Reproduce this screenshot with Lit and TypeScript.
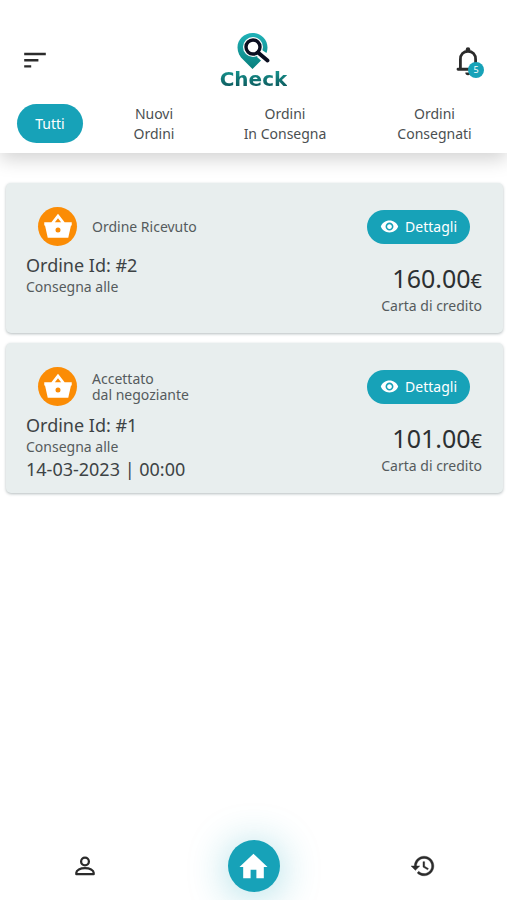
import { LitElement, html, css, svg, nothing } from "lit";
import { customElement, property, state } from "lit/decorators.js";
import { classMap } from "lit/directives/class-map.js";

interface Order {
  id: number;
  status: string[];
  total: string;
  payment: string;
  delivery?: string;
}

const ORDERS: Order[] = [
  { id: 2, status: ["Ordine Ricevuto"], total: "160.00", payment: "Carta di credito" },
  {
    id: 1,
    status: ["Accettato", "dal negoziante"],
    total: "101.00",
    payment: "Carta di credito",
    delivery: "14-03-2023 | 00:00",
  },
];

const TABS: string[][] = [
  ["Tutti"],
  ["Nuovi", "Ordini"],
  ["Ordini", "In Consegna"],
  ["Ordini", "Consegnati"],
];

const lines = (parts: string[]) => parts.map((p, i) => html`${i ? html`<br />` : nothing}${p}`);

const shape = {
  basket: svg`<path fill-rule="evenodd" d="M1 8.200h5.700L12 1.300l5.300 6.900H23v2.600h-.6L20.200 20.500H3.800L1.600 10.800H1zM9.500 8.200h5L12 4.900zM12 12.300a2 2 0 1 0 0 4 2 2 0 0 0 0-4z"/>`,
  eye: svg`<path d="M12 4.500C7 4.500 2.730 7.610 1 12c1.730 4.390 6 7.500 11 7.500s9.270-3.110 11-7.500c-1.730-4.390-6-7.500-11-7.500zM12 17c-2.760 0-5-2.240-5-5s2.240-5 5-5 5 2.240 5 5-2.240 5-5 5zm0-8c-1.660 0-3 1.340-3 3s1.340 3 3 3 3-1.340 3-3-1.340-3-3-3z"/>`,
  home: svg`<path d="M9.900 20.500v-6.200h4.200v6.200h5.400v-8.200H22.200L12 2.800 1.800 12.300h2.700v8.200z"/>`,
  history: svg`<path stroke="currentColor" stroke-width=".4" d="M13 3c-4.970 0-9 4.030-9 9H1l3.890 3.890.07.14L9 12H6c0-3.870 3.130-7 7-7s7 3.130 7 7-3.130 7-7 7c-1.930 0-3.680-.79-4.940-2.060l-1.420 1.420C8.270 19.990 10.510 21 13 21c4.970 0 9-4.030 9-9s-4.030-9-9-9zm-1 5v5l4.280 2.540.72-1.210-3.500-2.080V8H12z"/>`,
  person: svg`<g fill="none" stroke="currentColor" stroke-width="2.100"><circle cx="12" cy="7.800" r="3.600"/><path d="M4 19.500v-1.200c0-2.600 3.600-4.300 8-4.300s8 1.700 8 4.300v1.200z" stroke-linejoin="round"/></g>`,
  bell: svg`<path d="M4.500 18.200h15M6.300 18v-7.200c0-3.600 2.300-6.100 5.700-6.100s5.700 2.500 5.700 6.100V18" fill="none" stroke="currentColor" stroke-width="2.100" stroke-linecap="round" stroke-linejoin="round"/><circle cx="12" cy="3.300" r="1.700"/><path d="M10 20.700h4a2 2 0 0 1-4 0z"/>`,
  menu: svg`<path d="M1.200 5h21.600M1.200 11.200h14.200M1.200 17.400h7" fill="none" stroke="currentColor" stroke-width="2.400"/>`,
};

const icon = (name: keyof typeof shape) =>
  html`<svg viewBox="0 0 24 24" fill="currentColor" aria-hidden="true">${shape[name]}</svg>`;

@customElement("order-card")
export class OrderCard extends LitElement {
  @property({ attribute: false }) order!: Order;

  static styles = css`
    :host {
      display: block;
      min-height: 114px;
      padding: 24px 21px 12px 20px;
      border-radius: 5px;
      background: #e8eeee;
      box-shadow: 0 1px 3px rgba(70, 90, 95, 0.4);
      color: #3d4345;
    }
    .head,
    .body {
      display: flex;
      justify-content: space-between;
    }
    .head {
      align-items: center;
      padding: 0 12px;
      margin-bottom: 8px;
    }
    .status {
      display: flex;
      align-items: center;
      gap: 15px;
      font-size: 14px;
      line-height: 16px;
      color: #555b5d;
    }
    .disc {
      display: grid;
      place-items: center;
      width: 39px;
      height: 39px;
      border-radius: 50%;
      background: #fb8c05;
      color: #fff;
    }
    .disc svg {
      width: 30px;
      height: 30px;
    }
    .details {
      display: flex;
      align-items: center;
      gap: 6px;
      height: 34px;
      padding: 0 13px;
      border: 0;
      border-radius: 17px;
      background: #17a2b8;
      color: #fff;
      font: inherit;
      font-size: 14px;
      cursor: pointer;
    }
    .details svg {
      width: 19px;
      height: 19px;
    }
    .title,
    .date,
    .note {
      margin: 0;
      line-height: 22px;
      font-weight: 400;
    }
    .title,
    .date {
      font-size: 18px;
    }
    .note {
      font-size: 14px;
      color: #555b5d;
    }
    .right {
      padding-top: 10px;
      text-align: right;
    }
    .price {
      margin: 0;
      font-size: 25px;
      line-height: 28px;
      color: #2c3032;
    }
    .euro {
      font-size: 20px;
    }
  `;

  render() {
    const o = this.order;
    return html`
      <div class="head">
        <div class="status"><span class="disc">${icon("basket")}</span><span>${lines(o.status)}</span></div>
        <button class="details" type="button">${icon("eye")}<span>Dettagli</span></button>
      </div>
      <div class="body">
        <div>
          <h2 class="title">Ordine Id: #${o.id}</h2>
          <p class="note">Consegna alle</p>
          ${o.delivery ? html`<p class="date">${o.delivery}</p>` : nothing}
        </div>
        <div class="right">
          <p class="price">${o.total}<span class="euro">€</span></p>
          <p class="note">${o.payment}</p>
        </div>
      </div>
    `;
  }
}

@customElement("app-root")
export class AppRoot extends LitElement {
  @state() private tab = 0;

  static styles = css`
    :host {
      display: flex;
      flex-direction: column;
      min-height: 100vh;
      overflow: hidden;
      background: #fff;
      font-family: "Noto Sans", "Open Sans", sans-serif;
      color: #4b4f51;
    }
    button {
      border: 0;
      padding: 0;
      background: none;
      font: inherit;
      color: inherit;
      cursor: pointer;
    }
    header {
      background: #fff;
      box-shadow: 0 6px 18px rgba(0, 0, 0, 0.18);
    }
    .bar {
      display: grid;
      grid-template-columns: 1fr auto 1fr;
      align-items: center;
      padding: 32px 23px 0;
    }
    .icon {
      display: block;
      color: #2b2b2b;
    }
    .icon svg {
      display: block;
      width: 24px;
      height: 24px;
    }
    .brand {
      display: flex;
      flex-direction: column;
      align-items: center;
      text-decoration: none;
    }
    .pin {
      display: block;
      width: 34px;
      height: 38px;
    }
    .word {
      font-family: "DejaVu Sans", sans-serif;
      font-weight: 700;
      font-size: 20px;
      line-height: 18px;
      padding-bottom: 2px;
      background: linear-gradient(#16958f, #0b4f55);
      background-clip: text;
      -webkit-background-clip: text;
      color: transparent;
    }
    .bell {
      position: relative;
      justify-self: end;
    }
    .icon.bell svg {
      width: 32px;
      height: 32px;
    }
    .badge {
      position: absolute;
      right: 0;
      bottom: -1px;
      width: 16px;
      height: 16px;
      border-radius: 50%;
      background: #17a2b8;
      color: #fff;
      font-size: 9px;
      line-height: 15px;
      text-align: center;
    }
    .tabs {
      display: grid;
      grid-template-columns: 100fr 108fr 154fr 145fr;
      place-items: center;
      padding: 12px 0 8px;
      min-height: 43px;
    }
    .tab {
      font-size: 14px;
      line-height: 20px;
    }
    .active {
      height: 39px;
      padding: 0 18px;
      border-radius: 20px;
      background: #17a2b8;
      color: #fff;
    }
    main {
      display: flex;
      flex-direction: column;
      gap: 10px;
      padding: 30px 4px 8px 6px;
    }
    nav {
      display: grid;
      grid-template-columns: repeat(3, 1fr);
      place-items: center;
      margin-top: auto;
      padding-bottom: 8px;
    }
    nav .icon svg {
      width: 26px;
      height: 26px;
    }
    .home {
      display: grid;
      place-items: center;
      width: 52px;
      height: 52px;
      border-radius: 50%;
      background: #17a2b8;
      color: #fff;
      box-shadow: 0 4px 40px rgba(23, 162, 184, 0.4);
    }
    .home svg {
      width: 33px;
      height: 33px;
    }
  `;

  render() {
    return html`
      <header>
        <div class="bar">
          <button class="icon" type="button" aria-label="Menu">${icon("menu")}</button>
          <a class="brand" href="#">
            <svg class="pin" viewBox="0 0 34 38" aria-hidden="true">
              <defs>
                <linearGradient id="teal" x1="0" y1="0" x2="0" y2="1">
                  <stop offset="0" stop-color="#20b2b8" />
                  <stop offset="1" stop-color="#087f7c" />
                </linearGradient>
              </defs>
              <path d="M16.500 1C8 1 1.500 7.500 1.500 15.500c0 5 2.400 9.300 6 12.600L16.500 37l8.500-8.500-4-3.500L26 18l4.500 3A15 15 0 0 0 31.500 15.500C31.500 7.500 25 1 16.500 1z" fill="url(#teal)" />
              <circle cx="17" cy="15" r="10" fill="#fff" />
              <path d="M22 20l12 11" stroke="#fff" stroke-width="7" />
              <circle cx="17" cy="15" r="7" fill="none" stroke="#0b0e20" stroke-width="3.400" />
              <path d="M22 20.500l9.500 8" stroke="#0b0e20" stroke-width="3.800" stroke-linecap="round" />
            </svg>
            <span class="word">Check</span>
          </a>
          <button class="icon bell" type="button" aria-label="Notifiche">
            ${icon("bell")}<span class="badge">5</span>
          </button>
        </div>
        <div class="tabs">
          ${TABS.map(
            (t, i) => html`<button
              type="button"
              class=${classMap({ tab: true, active: i === this.tab })}
              aria-pressed=${i === this.tab}
              @click=${() => (this.tab = i)}
            >${lines(t)}</button>`
          )}
        </div>
      </header>
      <main>${ORDERS.map((o) => html`<order-card .order=${o}></order-card>`)}</main>
      <nav>
        <button class="icon" type="button" aria-label="Profilo">${icon("person")}</button>
        <button class="home" type="button" aria-label="Home">${icon("home")}</button>
        <button class="icon" type="button" aria-label="Cronologia">${icon("history")}</button>
      </nav>
    `;
  }
}
